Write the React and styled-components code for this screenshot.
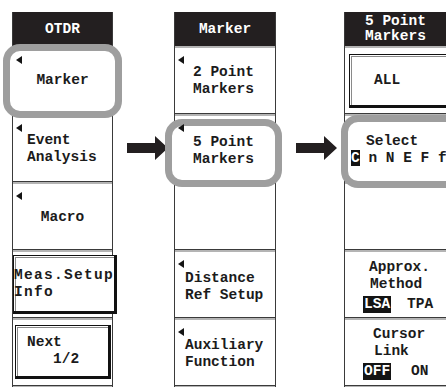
import React from 'react';
import styled, { createGlobalStyle } from 'styled-components';

const Global = createGlobalStyle`
  html, body { margin: 0; padding: 0; background: #fff; overflow: hidden; }
  body { font-family: "Liberation Mono", "DejaVu Sans Mono", monospace; }
`;

const Page = styled.div`
  width: 446px;
  height: 387px;
  overflow: hidden;
  box-sizing: border-box;
  padding: 12px 0 0 12px;
  display: grid;
  grid-template-columns: 101px 61px 102px 68px 112px;
  align-items: start;
`;

const Column = styled.div`
  display: flex;
  flex-direction: column;
  gap: 2px;
  height: 380px;
  box-sizing: border-box;
  background: #b4b4b4;
  border-left: 1px solid #3a3a3a;
  border-right: 1px solid #3a3a3a;
`;

const Header = styled.div`
  flex: 0 0 34px;
  display: flex;
  flex-direction: column;
  align-items: ${p => (p.$start ? 'flex-start' : 'center')};
  padding-left: ${p => p.$pad || 0}px;
  justify-content: center;
  background: #231f20;
  color: #fff;
  font-size: 14.5px;
  line-height: 15px;
  font-weight: 700;
`;

const Slot = styled.div`
  position: relative;
  flex: 0 0 66px;
  display: flex;
  box-sizing: border-box;
  background: #fff;
  border-bottom: 1px solid #3a3a3a;
`;

const Ring = styled.div`
  position: absolute;
  z-index: 1;
  top: ${p => p.$t}px;
  bottom: ${p => p.$b}px;
  left: ${p => p.$l}px;
  right: ${p => p.$r}px;
  border: 7px solid #9e9e9e;
  border-radius: 17px;
  background: #fff;
`;

const Tri = styled.span`
  position: absolute;
  z-index: 2;
  top: 8px;
  left: 3px;
  width: 0;
  height: 0;
  border-top: 4.5px solid transparent;
  border-bottom: 4.5px solid transparent;
  border-right: 6px solid #141414;
`;

const Bevel = styled.div`
  flex: 1;
  display: flex;
  margin: ${p => p.$m};
  box-sizing: border-box;
  border: 1px solid #111;
  border-right-width: 3px;
  border-bottom-width: 3px;
  box-shadow: inset 1px 1px 0 #fff, inset 2px 2px 0 #8a8a8a;
  background: #fff;
`;

const Label = styled.div`
  position: relative;
  z-index: 2;
  flex: 1;
  display: flex;
  flex-direction: column;
  justify-content: center;
  align-items: ${p => (p.$center ? 'center' : 'flex-start')};
  padding-left: ${p => p.$pad || 0}px;
  padding-top: ${p => p.$dy || 0}px;
  font-size: 14.5px;
  line-height: 17px;
  font-weight: 700;
  color: #1b1b1b;
  white-space: pre;
  letter-spacing: ${p => p.$ls || 0}px;
`;

const Line = styled.div`
  padding-left: ${p => p.$pad || 0}px;
`;

const Inverse = styled.span`
  background: #141414;
  color: #fff;
  padding: 0 ${p => p.$px ?? 1}px;
`;

const Toggle = styled.div`
  display: flex;
  gap: ${p => p.$gap}px;
  margin-left: ${p => p.$pad}px;
  margin-top: 3px;
`;

const ArrowBox = styled.div`
  margin-top: 124px;
  margin-left: ${p => p.$x}px;
  line-height: 0;
`;

const Arrow = ({ x }) => (
  <ArrowBox $x={x}>
    <svg width="41" height="24" viewBox="0 0 41 24">
      <path d="M0 7H28V0L41 12L28 24V17H0Z" fill="#231f20" />
    </svg>
  </ArrowBox>
);

export default function App() {
  return (
    <>
      <Global />
      <Page>
        <Column>
          <Header>OTDR</Header>
          <Slot>
            <Ring $t={-4} $b={-5} $l={-10} $r={-10} />
            <Tri />
            <Label $center>Marker</Label>
          </Slot>
          <Slot>
            <Tri />
            <Label $pad={14}>
              <Line>Event</Line>
              <Line>Analysis</Line>
            </Label>
          </Slot>
          <Slot>
            <Tri />
            <Label $center $dy={2}>Macro</Label>
          </Slot>
          <Slot>
            <Bevel $m="3px 0 3px 0">
              <Label $ls={1.3} $dy={1}>
                <Line>Meas.Setup</Line>
                <Line>Info</Line>
              </Label>
            </Bevel>
          </Slot>
          <Slot>
            <Bevel $m="5px 1px 6px 2px">
              <Label $pad={11}>
                <Line>Next</Line>
                <Line>{'   1/2'}</Line>
              </Label>
            </Bevel>
          </Slot>
        </Column>

        <Arrow x={14} />

        <Column>
          <Header>Marker</Header>
          <Slot>
            <Tri />
            <Label $pad={18}>
              <Line>2 Point</Line>
              <Line>Markers</Line>
            </Label>
          </Slot>
          <Slot>
            <Ring $t={3} $b={-6} $l={-10} $r={-7} />
            <Tri />
            <Label $pad={18} $dy={4}>
              <Line>5 Point</Line>
              <Line>Markers</Line>
            </Label>
          </Slot>
          <Slot />
          <Slot>
            <Tri />
            <Label $pad={10} $dy={4}>
              <Line>Distance</Line>
              <Line>Ref Setup</Line>
            </Label>
          </Slot>
          <Slot>
            <Tri />
            <Label $pad={10} $dy={2}>
              <Line>Auxiliary</Line>
              <Line>Function</Line>
            </Label>
          </Slot>
        </Column>

        <Arrow x={20} />

        <Column>
          <Header $start $pad={20}>
            <span>5 Point</span>
            <span>Markers</span>
          </Header>
          <Slot>
            <Bevel $m="6px 0 5px 4px">
              <Label $pad={24}>ALL</Label>
            </Bevel>
          </Slot>
          <Slot>
            <Ring $t={-1} $b={-7} $l={-4} $r={-10} />
            <Label $dy={2}>
              <Line $pad={21}>Select</Line>
              <Line $pad={6}>
                <Inverse $px={0}>C</Inverse>
                {' n N E F f'}
              </Line>
            </Label>
          </Slot>
          <Slot />
          <Slot>
            <Label $dy={2}>
              <Line $pad={24}>Approx.</Line>
              <Line $pad={25}>Method</Line>
              <Toggle $pad={18} $gap={16}>
                <Inverse>LSA</Inverse>
                <span>TPA</span>
              </Toggle>
            </Label>
          </Slot>
          <Slot>
            <Label>
              <Line $pad={28}>Cursor</Line>
              <Line $pad={29}>Link</Line>
              <Toggle $pad={18} $gap={20}>
                <Inverse>OFF</Inverse>
                <span>ON</span>
              </Toggle>
            </Label>
          </Slot>
        </Column>
      </Page>
    </>
  );
}
